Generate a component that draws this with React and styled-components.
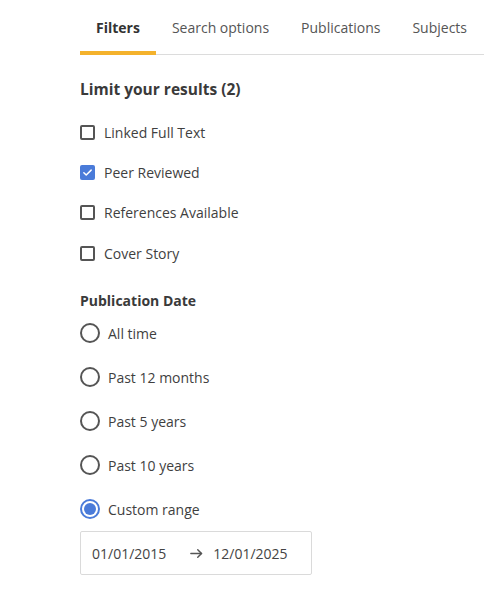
import React, { useState } from "react";
import styled, { createGlobalStyle } from "styled-components";

const GlobalStyle = createGlobalStyle`
  * { box-sizing: border-box; }
  body {
    margin: 0;
    background: #fff;
    font-family: "Open Sans", "Noto Sans", sans-serif;
    color: #333;
  }
`;

const Panel = styled.div`
  padding-left: 80px;
  width: 484px;
  overflow: hidden;
`;

const TabBar = styled.div`
  display: flex;
  height: 55px;
  border-bottom: 1px solid #dcdcdc;
  width: 420px;
`;

const Tab = styled.button`
  border: none;
  background: none;
  padding: 0 16px;
  height: 55px;
  margin-bottom: -1px;
  font-family: inherit;
  font-size: 14px;
  font-weight: ${(p) => (p.active ? 700 : 400)};
  color: ${(p) => (p.active ? "#333" : "#555")};
  border-bottom: 4px solid ${(p) => (p.active ? "#f4b22c" : "transparent")};
  padding-top: 4px;
  white-space: nowrap;
  cursor: pointer;
`;

const Heading = styled.h2`
  margin: 23px 0 12px;
  font-size: 15.5px;
  line-height: 22px;
  font-weight: 700;
  color: #3a3a3a;
`;

const SubHeading = styled.h3`
  margin: 18px 0 0;
  font-size: 14px;
  line-height: 20px;
  font-weight: 700;
  color: #3a3a3a;
`;

const Row = styled.label`
  display: flex;
  align-items: center;
  height: ${(p) => p.h}px;
  font-size: 14px;
  color: #3f3f3f;
  cursor: pointer;
`;

const Box = styled.span`
  width: 15px;
  height: 15px;
  border-radius: 2px;
  border: ${(p) => (p.checked ? "none" : "2px solid #555")};
  background: ${(p) => (p.checked ? "#4a7bd9" : "#fff")};
  display: flex;
  align-items: center;
  justify-content: center;
  margin-right: 9px;
  flex-shrink: 0;
`;

const Radio = styled.span`
  width: 20px;
  height: 20px;
  border-radius: 50%;
  border: 2px solid ${(p) => (p.checked ? "#4a7bd9" : "#555")};
  margin-right: 8px;
  flex-shrink: 0;
  display: flex;
  align-items: center;
  justify-content: center;

  &::after {
    content: "";
    width: 12px;
    height: 12px;
    border-radius: 50%;
    background: ${(p) => (p.checked ? "#4a7bd9" : "transparent")};
  }
`;

const DateBox = styled.div`
  display: flex;
  align-items: center;
  width: 232px;
  height: 44px;
  border: 1px solid #dadada;
  border-radius: 2px;
  padding: 0 11px;
  font-size: 14px;
  color: #444;
`;

const DateInput = styled.span`
  width: ${(p) => p.w}px;
  padding-left: ${(p) => p.indent || 0}px;
`;

const Arrow = styled.span`
  display: flex;
  width: 23px;
  color: #555;
`;

const Check = () => (
  <svg width="11" height="11" viewBox="0 0 12 12" fill="none">
    <path d="M2 6.2l2.6 2.6L10 3.4" stroke="#fff" strokeWidth="1.6" strokeLinecap="round" strokeLinejoin="round" />
  </svg>
);

const tabs = ["Filters", "Search options", "Publications", "Subjects"];
const limits = ["Linked Full Text", "Peer Reviewed", "References Available", "Cover Story"];
const dates = ["All time", "Past 12 months", "Past 5 years", "Past 10 years", "Custom range"];

export default function App() {
  const [tab, setTab] = useState(0);
  const [checked, setChecked] = useState({ "Peer Reviewed": true });
  const [range, setRange] = useState("Custom range");

  return (
    <>
      <GlobalStyle />
      <Panel>
        <TabBar>
          {tabs.map((t, i) => (
            <Tab key={t} active={i === tab} onClick={() => setTab(i)}>
              {t}
            </Tab>
          ))}
        </TabBar>

        <Heading>Limit your results (2)</Heading>
        {limits.map((l) => (
          <Row key={l} h={40.3} onClick={() => setChecked({ ...checked, [l]: !checked[l] })}>
            <Box checked={checked[l]}>{checked[l] && <Check />}</Box>
            {l}
          </Row>
        ))}

        <SubHeading>Publication Date</SubHeading>
        {dates.map((d) => (
          <Row key={d} h={44} onClick={() => setRange(d)}>
            <Radio checked={range === d} />
            {d}
          </Row>
        ))}

        <DateBox>
          <DateInput w={98}>01/01/2015</DateInput>
          <Arrow>
            <svg width="15" height="15" viewBox="0 0 24 24" fill="none" stroke="currentColor" strokeWidth="2.3" strokeLinecap="round" strokeLinejoin="round">
              <path d="M3 12h17" />
              <path d="M14 6l6 6-6 6" />
            </svg>
          </Arrow>
          <DateInput w={90} indent={2}>12/01/2025</DateInput>
        </DateBox>
      </Panel>
    </>
  );
}
